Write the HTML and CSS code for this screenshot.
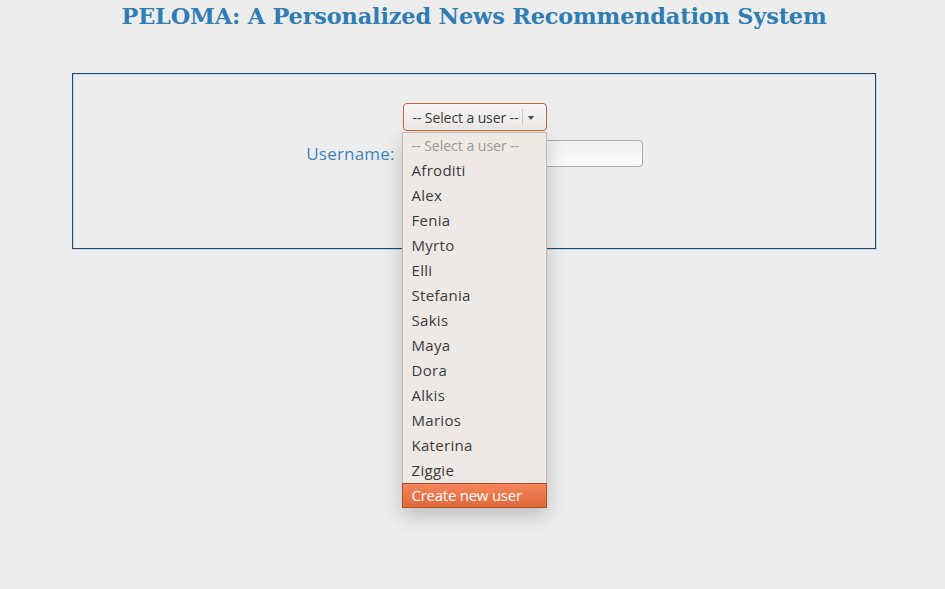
FILE: index.html
```html
<!DOCTYPE html>
<html>
<head>
<meta charset="utf-8">
<link rel="stylesheet" href="styles.css">
</head>
<body>
<div class="page">
  <h1 class="title">PELOMA: A Personalized News Recommendation System</h1>
  <div class="panel">
    <div class="select-row">
      <div class="select-wrap">
        <div class="select-btn">
          <span class="select-text">-- Select a user --</span>
          <span class="select-div"></span>
          <span class="select-arrow"></span>
        </div>
        <ul class="menu">
          <li class="placeholder">-- Select a user --</li>
          <li>Afroditi</li>
          <li>Alex</li>
          <li>Fenia</li>
          <li>Myrto</li>
          <li>Elli</li>
          <li>Stefania</li>
          <li>Sakis</li>
          <li>Maya</li>
          <li>Dora</li>
          <li>Alkis</li>
          <li>Marios</li>
          <li>Katerina</li>
          <li>Ziggie</li>
          <li class="active">Create new user</li>
        </ul>
      </div>
    </div>
    <div class="user-row">
      <label class="user-label">Username:</label>
      <div class="user-input"></div>
    </div>
  </div>
</div>
</body>
</html>
```

FILE: styles.css
```css
html, body {
  margin: 0;
  padding: 0;
  background: #ededed;
}
body {
  width: 945px;
  height: 589px;
  overflow: hidden;
}
.page {
  margin: 0 69px 0 72px;
  width: 804px;
}
.title {
  margin: 0;
  padding-top: 3px;
  height: 73px;
  box-sizing: border-box;
  text-align: center;
  font-family: "DejaVu Serif", Georgia, serif;
  font-weight: bold;
  font-size: 22.4px;
  line-height: 26px;
  color: #2f7db3;
  letter-spacing: -0.15px;
}
.panel {
  height: 176px;
  box-sizing: border-box;
  border: 1px solid #1d4a6d;
  box-shadow: 1px 1px 0 #c3d7e8, inset 1px 1px 0 #c7dae9;
  padding-top: 29px;
  padding-left: 1px;
}
.select-row {
  display: flex;
  justify-content: center;
}
.select-wrap {
  position: relative;
  width: 144px;
}
.select-btn {
  height: 28px;
  box-sizing: border-box;
  border: 1px solid #c4643c;
  border-radius: 4px;
  background: linear-gradient(#f6f5f4, #ebe8e5);
  display: flex;
  align-items: center;
  padding-left: 9px;
  font-family: "Open Sans", "Noto Sans", sans-serif;
  font-size: 14px;
  color: #3c3c3c;
  box-shadow: inset 0 0 0 1px rgba(255,255,255,0.5);
}
.select-text {
  letter-spacing: -0.1px;
}
.select-div {
  width: 1px;
  height: 16px;
  background: #cfcac5;
  margin-left: 4px;
}
.select-arrow {
  width: 0;
  height: 0;
  border-left: 3px solid transparent;
  border-right: 3px solid transparent;
  border-top: 4px solid #4a4a4a;
  margin-left: 5px;
  margin-top: 1px;
}
.menu {
  position: absolute;
  left: -1px;
  top: 29px;
  width: 145px;
  box-sizing: border-box;
  margin: 0;
  padding: 0;
  list-style: none;
  background: #eee9e4;
  border: 1px solid #c2bab3;
  box-shadow: 0 8px 18px rgba(0,0,0,0.2);
  font-family: "Open Sans", "Noto Sans", sans-serif;
  font-size: 15px;
  color: #3c3c3c;
  z-index: 5;
}
.menu li {
  height: 25px;
  line-height: 25px;
  padding-left: 9px;
  letter-spacing: 0.3px;
}
.menu li.placeholder {
  color: #9d9a97;
  font-size: 14px;
  letter-spacing: 0;
}
.menu li.active {
  background: linear-gradient(#f5855a, #e0683b);
  color: #fff;
  margin: 0 -1px -1px -1px;
  border: 1px solid #b24e29;
  height: 23px;
  line-height: 23px;
  padding-left: 9px;
  letter-spacing: -0.25px;
}
.user-row {
  display: flex;
  justify-content: center;
  align-items: center;
  margin-top: 9px;
  gap: 7px;
}
.user-label {
  font-family: "Open Sans", "Noto Sans", sans-serif;
  font-size: 17px;
  color: #3b86bf;
  letter-spacing: 0.2px;
}
.user-input {
  width: 241px;
  height: 27px;
  box-sizing: border-box;
  border: 1px solid #a9a9a9;
  border-radius: 4px;
  background: linear-gradient(#f1f1f1, #fbfbfb);
}
```
